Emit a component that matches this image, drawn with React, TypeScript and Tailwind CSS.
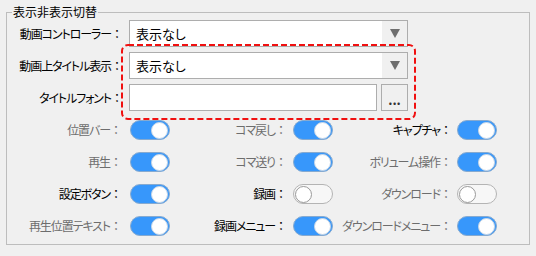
import React from "react";

const font =
  "font-['Noto_Sans_CJK_JP','Noto_Sans',sans-serif] [font-feature-settings:'palt'] text-[12px]";

const Toggle = ({ on }: { on: boolean }) =>
  on ? (
    <div className="flex h-[20px] w-[40px] items-center justify-end rounded-full border border-[#86aad0] bg-[#3797fb] pr-[1px]">
      <div className="h-[17px] w-[17px] rounded-full border border-[#c9d7e6] bg-white" />
    </div>
  ) : (
    <div className="flex h-[20px] w-[40px] items-center rounded-full border border-[#b4b4b4] bg-[#f7f7f7] pl-[1px]">
      <div className="h-[17px] w-[17px] rounded-full border border-[#9a9a9a] bg-white" />
    </div>
  );

const Arrow = () => (
  <svg width="10" height="9" viewBox="0 0 10 9">
    <polygon points="0,0 10,0 5,9" fill="#6e6e6e" />
  </svg>
);

const Combo = ({ value }: { value: string }) => (
  <div className="flex h-[27px] w-[279px] border border-[#adadad] bg-white">
    <div className="flex flex-1 items-center pl-[6px] text-[13px] text-black">{value}</div>
    <div className="flex w-[25px] items-center justify-center bg-[#f0f0f0]">
      <Arrow />
    </div>
  </div>
);

// label text + full-width colon (kept unproportional so it keeps its side space)
const Label = ({ text, className = "" }: { text: string; className?: string }) => (
  <span className={`whitespace-nowrap text-right ${className}`}>
    <span className="tracking-[-1.1px]">{text}</span>
    <span className="[font-feature-settings:normal]">：</span>
  </span>
);

type Cell = { label: string; on: boolean; dark?: boolean };

const rows: Cell[][] = [
  [
    { label: "位置バー", on: true },
    { label: "コマ戻し", on: true },
    { label: "キャプチャ", on: true, dark: true },
  ],
  [
    { label: "再生", on: true },
    { label: "コマ送り", on: true },
    { label: "ボリューム操作", on: true },
  ],
  [
    { label: "設定ボタン", on: true, dark: true },
    { label: "録画", on: false, dark: true },
    { label: "ダウンロード", on: false },
  ],
  [
    { label: "再生位置テキスト", on: true },
    { label: "録画メニュー", on: true, dark: true },
    { label: "ダウンロードメニュー", on: true },
  ],
];

const gaps = ["gap-[8px]", "gap-[6px]", "gap-[5px]"];
const widths = ["w-[163px]", "w-[163px]", "w-[164px]"];

export default function App() {
  return (
    <div className={`relative h-[256px] w-[536px] bg-[#f0f0f0] px-[6px] pt-[4px] ${font}`}>
      <fieldset className="h-[241px] w-[524px] border border-[#bdbdbd]">
        <legend className="ml-[5px] px-[1px] leading-[16px] text-black">表示非表示切替</legend>

        <div className="flex flex-col gap-[5px]">
          <div className="flex h-[27px] items-center gap-[6px]">
            <Label text="動画コントローラー" className="w-[116px] text-black" />
            <Combo value="表示なし" />
          </div>
          <div className="flex h-[27px] items-center gap-[6px]">
            <Label text="動画上タイトル表示" className="w-[116px] text-black" />
            <Combo value="表示なし" />
          </div>
          <div className="flex h-[27px] items-center gap-[6px]">
            <Label text="タイトルフォント" className="w-[116px] text-black" />
            <div className="flex gap-[4px]">
              <div className="h-[27px] w-[248px] border border-[#adadad] bg-white" />
              <div className="flex h-[27px] w-[27px] items-center justify-center border border-[#adadad] bg-[#f0f0f0] pt-[4px] text-[13px] font-bold leading-none text-[#333]">
                ...
              </div>
            </div>
          </div>
        </div>

        <div className="mt-[9px] flex flex-col gap-[12px]">
          {rows.map((row, i) => (
            <div key={i} className="flex h-[20px]">
              {row.map((c, j) => (
                <div key={j} className={`flex items-center justify-end ${widths[j]} ${gaps[j]}`}>
                  <Label text={c.label} className={c.dark ? "text-black" : "text-[#6d6d6d]"} />
                  <Toggle on={c.on} />
                </div>
              ))}
            </div>
          ))}
        </div>
      </fieldset>

      <svg className="pointer-events-none absolute left-[120px] top-[43px]" width="297" height="78">
        <rect x="2" y="2" width="293" height="74" rx="6" fill="none" stroke="#f01010" strokeWidth="2" strokeDasharray="6 3" />
      </svg>
    </div>
  );
}
